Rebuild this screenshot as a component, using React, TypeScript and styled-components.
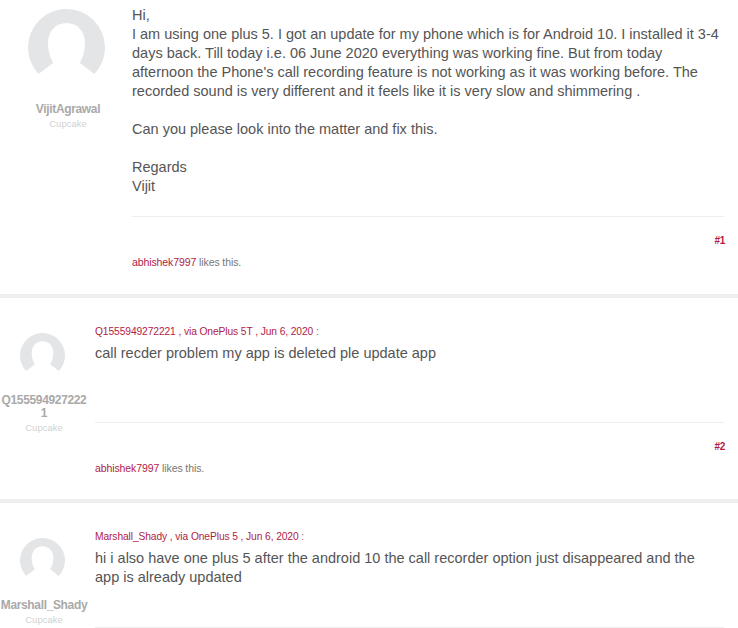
import React from "react";
import styled, { createGlobalStyle } from "styled-components";

const GlobalStyle = createGlobalStyle`
  html, body {
    margin: 0;
    padding: 0;
    background: #fff;
    overflow: hidden;
  }
  body {
    font-family: "Liberation Sans", Arial, sans-serif;
    color: #555;
  }
`;

const Page = styled.div`
  width: 738px;
  height: 628px;
  overflow: hidden;
`;

const Post = styled.article<{ $height: number; $first?: boolean }>`
  display: flex;
  height: ${(p) => p.$height}px;
  border-bottom: 4px solid #eee;
  padding-top: ${(p) => (p.$first ? 6 : 28)}px;
  &:last-child {
    border-bottom: none;
  }
`;

const Author = styled.div<{ $wide?: boolean }>`
  flex: none;
  box-sizing: border-box;
  width: ${(p) => (p.$wide ? 132 : 88)}px;
  display: flex;
  flex-direction: column;
  align-items: center;
  padding-top: ${(p) => (p.$wide ? 3 : 7)}px;
  padding-left: ${(p) => (p.$wide ? 4 : 0)}px;
`;

const AvatarIcon = styled.svg<{ $size: number; $gap: number; $shift: number }>`
  display: block;
  flex: none;
  width: ${(p) => p.$size}px;
  height: ${(p) => p.$size}px;
  margin-bottom: ${(p) => p.$gap}px;
  margin-right: ${(p) => p.$shift}px;
`;

const AuthorName = styled.div`
  width: 100%;
  font-size: 12px;
  line-height: 13px;
  font-weight: 700;
  color: #a9a9a9;
  text-align: center;
  word-break: break-all;
  letter-spacing: -0.35px;
`;

const AuthorRank = styled.div`
  margin-top: 2px;
  font-size: 9.5px;
  line-height: 12px;
  color: #d2d2d2;
`;

const Content = styled.div<{ $first?: boolean }>`
  flex: 1;
  min-width: 0;
  margin-right: 14px;
  margin-left: ${(p) => (p.$first ? 0 : 7)}px;
`;

const Meta = styled.div`
  font-size: 10.25px;
  line-height: 12px;
  color: #b01c45;
  margin-bottom: 6px;
  letter-spacing: -0.1px;
  span {
    color: #777;
  }
`;

const Body = styled.div<{ $height: number }>`
  height: ${(p) => p.$height}px;
  padding-right: 4px;
  font-size: 14.5px;
  line-height: 19px;
  color: #555;
`;

const Rule = styled.hr`
  margin: 0;
  border: none;
  border-top: 1px solid #eee;
`;

const PostNumber = styled.div`
  margin-top: 18px;
  margin-right: -1px;
  font-size: 10px;
  line-height: 12px;
  font-weight: 700;
  color: #b01c45;
  text-align: right;
  letter-spacing: -0.3px;
`;

const Likes = styled.div`
  margin-top: 9px;
  font-size: 10.5px;
  line-height: 12px;
  color: #777;
  letter-spacing: -0.1px;
  a {
    color: #b01c45;
    text-decoration: none;
  }
`;

const Avatar = ({ size, gap, shift }: { size: number; gap: number; shift: number }) => (
  <AvatarIcon $size={size} $gap={gap} $shift={shift} viewBox="0 0 77 77">
    <path d="M10.500 64.900A38.500 38.500 0 1 1 66.500 64.900L52 54H25Z" fill="#e4e5e7" />
    <path
      d="M38.500 14C27.500 14 20 22.500 20 34c0 10 3.500 19.500 9.500 25 3 2.700 6 4 9 4s6-1.300 9-4c6-5.500 9.500-15 9.500-25C57 22.500 49.500 14 38.500 14z"
      fill="#fff"
    />
  </AvatarIcon>
);

const App = () => {
  return (
    <Page>
      <GlobalStyle />
      <Post $first $height={288}>
        <Author $wide>
          <Avatar size={77} gap={17} shift={3} />
          <AuthorName>VijitAgrawal</AuthorName>
          <AuthorRank>Cupcake</AuthorRank>
        </Author>
        <Content $first>
          <Body $height={210}>
            Hi,
            <br />I am using one plus 5. I got an update for my phone which is for Android 10. I installed it 3-4
            days back. Till today i.e. 06 June 2020 everything was working fine. But from today afternoon the
            Phone's call recording feature is not working as it was working before. The recorded sound is very
            different and it feels like it is very slow and shimmering .
            <br />
            <br />
            Can you please look into the matter and fix this.
            <br />
            <br />
            Regards
            <br />
            Vijit
          </Body>
          <Rule />
          <PostNumber>#1</PostNumber>
          <Likes>
            <a href="#">abhishek7997</a> likes this.
          </Likes>
        </Content>
      </Post>
      <Post $height={173}>
        <Author>
          <Avatar size={45} gap={16} shift={4} />
          <AuthorName>Q1555949272221</AuthorName>
          <AuthorRank>Cupcake</AuthorRank>
        </Author>
        <Content>
          <Meta>
            Q1555949272221 , via OnePlus 5T , Jun 6, 2020 <span>:</span>
          </Meta>
          <Body $height={78}>call recder problem my app is deleted ple update app</Body>
          <Rule />
          <PostNumber>#2</PostNumber>
          <Likes>
            <a href="#">abhishek7997</a> likes this.
          </Likes>
        </Content>
      </Post>
      <Post $height={100}>
        <Author>
          <Avatar size={45} gap={16} shift={4} />
          <AuthorName>Marshall_Shady</AuthorName>
          <AuthorRank>Cupcake</AuthorRank>
        </Author>
        <Content>
          <Meta>
            Marshall_Shady , via OnePlus 5 , Jun 6, 2020 <span>:</span>
          </Meta>
          <Body $height={78}>
            hi i also have one plus 5 after the android 10 the call recorder option just disappeared and the app
            is already updated
          </Body>
          <Rule />
        </Content>
      </Post>
    </Page>
  );
};

export default App;
